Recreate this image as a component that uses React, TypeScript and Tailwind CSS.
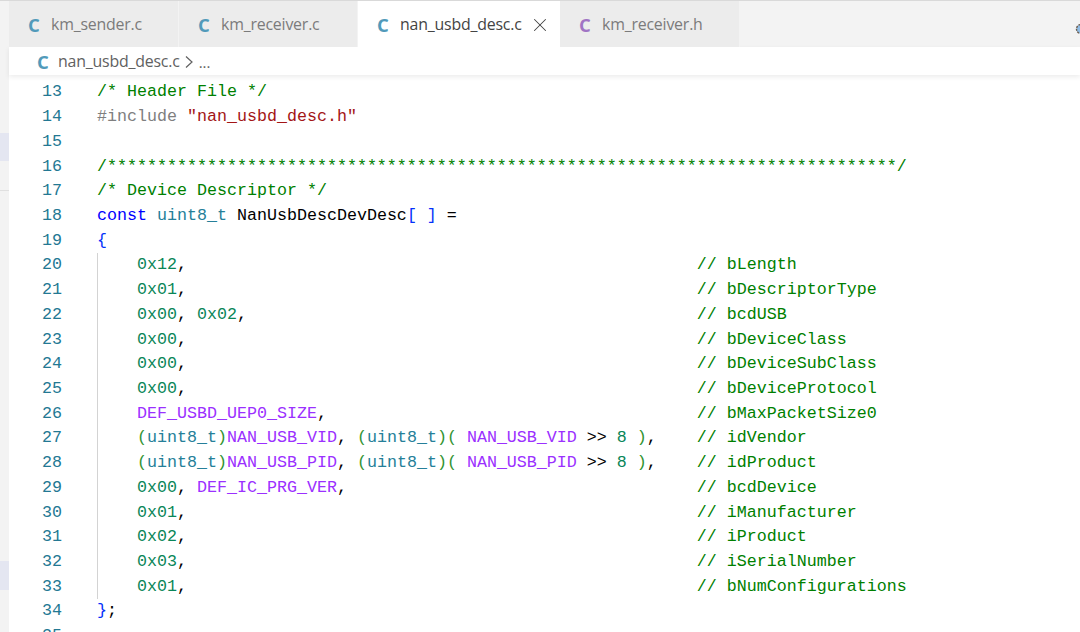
import type { ReactNode } from "react";
import { X } from "lucide-react";

const ui = "font-['Open_Sans',sans-serif]";

function Com({ children }: { children: ReactNode }) {
  return <span className="text-[#008000]">{children}</span>;
}
function Num({ children }: { children: ReactNode }) {
  return <span className="text-[#098658]">{children}</span>;
}
function Mac({ children }: { children: ReactNode }) {
  return <span className="text-[#9b30ff]">{children}</span>;
}
function Typ({ children }: { children: ReactNode }) {
  return <span className="text-[#267f99]">{children}</span>;
}
function Par({ children }: { children: ReactNode }) {
  return <span className="text-[#319331]">{children}</span>;
}

const hex = (a: string) => <Num>{a}</Num>;

function castLine(name: string) {
  return (
    <>
      <Par>(</Par>
      <Typ>uint8_t</Typ>
      <Par>)</Par>
      <Mac>{name}</Mac>
      {", "}
      <Par>(</Par>
      <Typ>uint8_t</Typ>
      <Par>)( </Par>
      <Mac>{name}</Mac>
      {" >> "}
      <Num>8</Num>
      <Par> )</Par>
      {","}
    </>
  );
}

// table rows: code part + trailing comment at column 60
const tableRows: { code: ReactNode; pad: number; note: string }[] = [
  { code: <>{hex("0x12")},</>, pad: 51, note: "bLength" },
  { code: <>{hex("0x01")},</>, pad: 51, note: "bDescriptorType" },
  { code: <>{hex("0x00")}, {hex("0x02")},</>, pad: 45, note: "bcdUSB" },
  { code: <>{hex("0x00")},</>, pad: 51, note: "bDeviceClass" },
  { code: <>{hex("0x00")},</>, pad: 51, note: "bDeviceSubClass" },
  { code: <>{hex("0x00")},</>, pad: 51, note: "bDeviceProtocol" },
  { code: <><Mac>DEF_USBD_UEP0_SIZE</Mac>,</>, pad: 37, note: "bMaxPacketSize0" },
  { code: castLine("NAN_USB_VID"), pad: 4, note: "idVendor" },
  { code: castLine("NAN_USB_PID"), pad: 4, note: "idProduct" },
  { code: <>{hex("0x00")}, <Mac>DEF_IC_PRG_VER</Mac>,</>, pad: 35, note: "bcdDevice" },
  { code: <>{hex("0x01")},</>, pad: 51, note: "iManufacturer" },
  { code: <>{hex("0x02")},</>, pad: 51, note: "iProduct" },
  { code: <>{hex("0x03")},</>, pad: 51, note: "iSerialNumber" },
  { code: <>{hex("0x01")},</>, pad: 51, note: "bNumConfigurations" },
];

function Line({ n, children }: { n: number; children?: ReactNode }) {
  return (
    <div className="flex h-[24.72px] items-center whitespace-pre">
      <div className="w-[53px] shrink-0 text-right text-[#237893]">{n}</div>
      <div className="ml-[35px] h-full flex items-center">{children}</div>
    </div>
  );
}

function Tab({ name, color, active, w }: { name: string; color: string; active?: boolean; w: string }) {
  return (
    <div
      className={`flex h-full items-center pt-[2px] ${w} ${
        active ? "bg-white text-[#444444]" : "bg-[#ececec] text-[#7b7b7b] border-r border-[#f3f3f3]"
      }`}
    >
      <span className={`ml-[19px] w-[23px] text-[18.5px] font-bold ${color}`}>C</span>
      <span className="text-[15.9px] tracking-[-0.2px]">{name}</span>
      {active && <X className="ml-[7px] h-[22px] w-[22px] text-[#424242]" strokeWidth={1.1} />}
    </div>
  );
}

export default function App() {
  return (
    <div className={`relative h-[632px] w-[1080px] overflow-hidden bg-white ${ui}`}>
      <div className="h-px bg-[#d9d9d9]" />
      <div className="flex h-full">
        {/* side strip */}
        <div className="flex w-[9px] shrink-0 flex-col bg-[#f3f3f3]">
          <div className="mt-[132px] h-[28px] bg-[#e4e6f1]" />
          <div className="mt-[29px] h-px bg-[#e0e0e0]" />
          <div className="mt-[370px] h-[29px] bg-[#e4e6f1]" />
        </div>

        <div className="min-w-0 flex-1">
          {/* tab bar */}
          <div className="flex h-[46px] bg-[#f3f3f3]">
            <Tab name="km_sender.c" color="text-[#519aba]" w="w-[170px]" />
            <Tab name="km_receiver.c" color="text-[#519aba]" w="w-[179px]" />
            <Tab name="nan_usbd_desc.c" color="text-[#519aba]" w="w-[202px]" active />
            <Tab name="km_receiver.h" color="text-[#a074c4]" w="w-[180px]" />
          </div>

          {/* breadcrumb */}
          <div className="flex h-[28px] items-center bg-white pt-[2px] shadow-[0_2px_5px_rgba(0,0,0,0.08)] text-[#616161]">
            <span className="ml-[28px] w-[21px] text-[18.5px] font-bold text-[#519aba]">C</span>
            <span className="text-[15.9px] tracking-[-0.2px]">nan_usbd_desc.c</span>
            <span className="ml-[4px] text-[15px]">
              <svg width="10" height="14" viewBox="0 0 10 14" fill="none" stroke="#616161" strokeWidth="1.2">
                <path d="M2 1.5 8 7l-6 5.5" />
              </svg>
            </span>
            <span className="ml-[5px] text-[15px]">...</span>
          </div>

          {/* editor */}
          <div className="pt-[4.5px] font-['Liberation_Mono',monospace] text-[16.67px] text-[#000000]">
            <Line n={13}><Com>/* Header File */</Com></Line>
            <Line n={14}>
              <span className="text-[#7f7f7f]">#include </span>
              <span className="text-[#a31515]">"nan_usbd_desc.h"</span>
            </Line>
            <Line n={15} />
            <Line n={16}><Com>{"/" + "*".repeat(79) + "/"}</Com></Line>
            <Line n={17}><Com>/* Device Descriptor */</Com></Line>
            <Line n={18}>
              <span className="text-[#0000ff]">const </span>
              <Typ>uint8_t</Typ>
              {" NanUsbDescDevDesc"}
              <span className="text-[#0431fa]">[ ]</span>
              {" ="}
            </Line>
            <Line n={19}><span className="text-[#0431fa]">{"{"}</span></Line>
            {tableRows.map((row, i) => (
              <Line key={i} n={20 + i}>
                <div className="flex h-full items-center border-l border-[#d3d3d3] pl-[39px]">
                  {row.code}
                  {" ".repeat(row.pad)}
                  <Com>{"// " + row.note}</Com>
                </div>
              </Line>
            ))}
            <Line n={34}><span className="text-[#0431fa]">{"}"}</span>;</Line>
            <Line n={35} />
          </div>
        </div>
      </div>

      {/* clipped toolbar gear at the right edge */}
      <svg className="absolute left-[1075px] top-[23px]" width="10" height="12" viewBox="0 0 10 12">
        <circle cx="6" cy="6" r="4.5" fill="#8fbce6" stroke="#6b5a4a" strokeWidth="1.4" strokeDasharray="2 1" />
      </svg>
    </div>
  );
}
